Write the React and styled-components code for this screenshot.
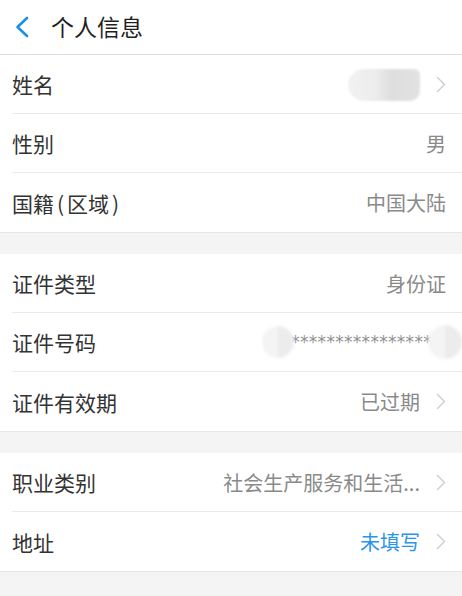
import React from "react";
import styled, { createGlobalStyle } from "styled-components";

const Global = createGlobalStyle`
  html, body { margin: 0; padding: 0; background: #f4f4f4; }
  body { font-family: "Noto Sans CJK SC", "Noto Sans", sans-serif; }
  #root { min-height: 596px; background: #f4f4f4; }
`;

const Page = styled.div`
  width: 462px;
  min-height: 596px;
  background: #f4f4f4;
`;

const Header = styled.header`
  height: 54px;
  background: #fff;
  border-bottom: 1px solid #dcdcdc;
  display: flex;
  align-items: center;
  padding-left: 14px;
  gap: 21px;
`;

const Title = styled.h1`
  margin: 0;
  font-size: 23px;
  font-weight: 400;
  color: #1f1f1f;
  line-height: 1;
  padding-bottom: 2px;
`;

const Section = styled.section`
  background: #fff;
  border-bottom: 1px solid #e6e6e6;
  padding-left: 12px;
  margin-top: ${(p) => (p.$first ? 0 : 21)}px;
`;

const Row = styled.div`
  box-sizing: border-box;
  height: 59px;
  display: flex;
  align-items: center;
  justify-content: space-between;
  padding-right: 16px;
  border-bottom: 1px solid #ebebeb;
  &:last-child { border-bottom: none; }
`;

const Label = styled.span`
  font-size: 21px;
  color: #333;
  white-space: nowrap;
  flex: none;
`;

const Paren = styled.span`
  margin: 0 3px;
`;

const Value = styled.span`
  flex: 0 1 auto;
  min-width: 0;
  margin-left: auto;
  text-align: right;
  font-size: 20px;
  color: ${(p) => (p.$accent ? "#2a94e8" : "#8a8a8a")};
  white-space: nowrap;
`;

const Chevron = styled.span`
  flex: none;
  width: 10px;
  margin-left: 16px;
  display: flex;
  align-items: center;
`;

const NameBlur = styled.span`
  display: inline-block;
  width: 72px;
  height: 32px;
  border-radius: 16px 6px 10px 16px;
  background: linear-gradient(90deg, #f2f2f2 0%, #ececec 40%, #dedede 60%, #e2e2e2 100%);
  filter: blur(1px);
  vertical-align: middle;
`;

const IdWrap = styled.span`
  flex: none;
  width: 200px;
  position: relative;
  display: flex;
  justify-content: flex-end;
  align-items: center;
  height: 100%;
  margin-right: -16px;
  overflow: hidden;
`;

const Stars = styled.span`
  font-size: 17px;
  color: #909090;
  letter-spacing: 0.3px;
  white-space: nowrap;
  margin-right: 30px;
  font-family: "DejaVu Sans", sans-serif;
`;

const Blob = styled.span`
  position: absolute;
  top: 50%;
  transform: translateY(-50%);
  width: ${(p) => p.$w}px;
  height: ${(p) => p.$h}px;
  border-radius: 50%;
  background: linear-gradient(90deg, #f4f4f4 50%, #ececec 50%);
  filter: blur(1.5px);
  ${(p) => (p.$side === "left" ? `left: ${p.$pos}px;` : `right: ${p.$pos}px;`)}
`;

const BackIcon = () => (
  <svg width="16" height="22" viewBox="0 0 16 22">
    <path d="M13 2 L3.5 11 L13 20" fill="none" stroke="#1e8fe8" strokeWidth="2.6" strokeLinecap="round" strokeLinejoin="round" />
  </svg>
);

const ChevronIcon = () => (
  <svg width="10" height="17" viewBox="0 0 10 17">
    <path d="M1.5 1.5 L8.5 8.5 L1.5 15.5" fill="none" stroke="#cccccc" strokeWidth="1.4" strokeLinecap="round" strokeLinejoin="round" />
  </svg>
);

const Item = ({ label, value, accent, chevron, children }) => (
  <Row>
    <Label>{label}</Label>
    {children ? children : <Value $accent={accent}>{value}</Value>}
    {chevron && (
      <Chevron>
        <ChevronIcon />
      </Chevron>
    )}
  </Row>
);

export default function App() {
  return (
    <Page>
      <Global />
      <Header>
        <BackIcon />
        <Title>个人信息</Title>
      </Header>
      <Section $first>
        <Item label="姓名" chevron>
          <Value>
            <NameBlur />
          </Value>
        </Item>
        <Item label="性别" value="男" />
        <Item
          label={
            <>
              国籍<Paren>(</Paren>区域<Paren>)</Paren>
            </>
          }
          value="中国大陆"
        />
      </Section>
      <Section>
        <Item label="证件类型" value="身份证" />
        <Item label="证件号码">
          <IdWrap>
            <Stars>*****************</Stars>
            <Blob $side="left" $pos={0} $w={32} $h={32} />
            <Blob $side="right" $pos={0} $w={34} $h={34} />
          </IdWrap>
        </Item>
        <Item label="证件有效期" value="已过期" chevron />
      </Section>
      <Section>
        <Item label="职业类别" value="社会生产服务和生活..." chevron />
        <Item label="地址" value="未填写" accent chevron />
      </Section>
    </Page>
  );
}
